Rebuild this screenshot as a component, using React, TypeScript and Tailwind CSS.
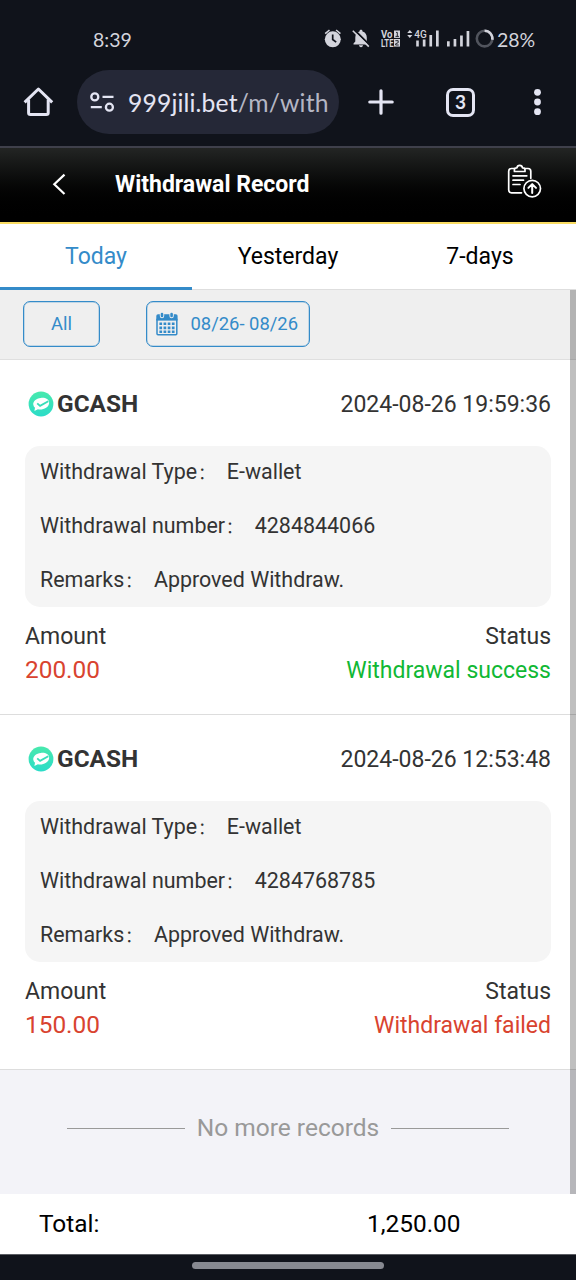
import React from "react";

type WithdrawalEntry = {
  time: string;
  number: string;
  amount: string;
  status: string;
  ok: boolean;
};

const entries: WithdrawalEntry[] = [
  { time: "2024-08-26 19:59:36", number: "4284844066", amount: "200.00", status: "Withdrawal success", ok: true },
  { time: "2024-08-26 12:53:48", number: "4284768785", amount: "150.00", status: "Withdrawal failed", ok: false },
];

function StatusIcons() {
  return (
    <svg className="block h-7 w-[178px] shrink-0" viewBox="322 25 178 28" fill="none">
      {/* alarm */}
      <circle cx="332.8" cy="39.3" r="8" fill="#d3d4dc" />
      <path d="M325.2 33.6l4.3-3.6M340.4 33.6l-4.3-3.6" stroke="#d3d4dc" strokeWidth="1.6" />
      <path d="M332.7 34.5v5l3.5 2.6" stroke="#10131b" strokeWidth="1.7" />
      {/* muted bell */}
      <path
        d="M361 29.8c1 0 1.5.7 1.5 1.6 2.8.8 4.3 3.1 4.3 6v4l1.7 2v1.2h-15v-1.2l1.8-2v-4c0-2.9 1.5-5.2 4.2-6 0-.9.5-1.6 1.5-1.6z"
        fill="#d3d4dc"
      />
      <path d="M359 45.3h4c0 1.1-.8 1.9-2 1.9s-2-.8-2-1.9z" fill="#d3d4dc" />
      <path d="M354.2 29.8l16 15.8" stroke="#10131b" strokeWidth="2" />
      <path d="M352.8 30.7l16 15.9" stroke="#d3d4dc" strokeWidth="1.6" />
      {/* VoLTE */}
      <g fill="#d3d4dc" fontFamily="Roboto, sans-serif" fontWeight="700">
        <text x="381" y="37.6" fontSize="10" textLength="11.5" lengthAdjust="spacingAndGlyphs">Vo</text>
        <text x="381" y="46.9" fontSize="10" textLength="12.5" lengthAdjust="spacingAndGlyphs">LTE</text>
      </g>
      <rect x="394" y="30.5" width="6" height="7.4" fill="#d3d4dc" />
      <rect x="394" y="39" width="6" height="7.6" fill="#d3d4dc" />
      <path d="M396 32.4h1.3v3.8M395.5 36.4h3.4M395.4 40.7h2.8v2l-2.5 1v1.3h3" stroke="#10131b" strokeWidth=".9" />
      {/* data arrows and 4G */}
      <path d="M407.2 33l2.6-2.9 2.6 2.9zM407.2 35l2.6 2.9 2.6-2.9z" fill="#d3d4dc" />
      <text x="414.3" y="37.8" fontSize="10.5" fill="#d3d4dc" fontFamily="Roboto, sans-serif" fontWeight="500" textLength="12.5" lengthAdjust="spacingAndGlyphs">4G</text>
      {/* signal bars */}
      <path
        d="M416.2 40.5h2.6v6h-2.6zM422.8 39.4h2.7v7.1h-2.7zM429.4 35h2.7v11.5h-2.7zM436 30.5h2.7v16H436zM447 41.2h2.7v5.3H447zM453.6 39h2.7v7.5h-2.7zM460.1 35.6h2.7v10.9h-2.7zM466.6 31h2.7v15.5h-2.7z"
        fill="#d3d4dc"
      />
      {/* battery ring */}
      <circle cx="484.6" cy="38.6" r="7.8" stroke="#51545d" strokeWidth="2.6" />
      <path d="M484.6 30.8a7.8 7.8 0 0 1 7.7 9" stroke="#d3d4dc" strokeWidth="2.6" />
    </svg>
  );
}

function StatusBar() {
  return (
    <div className="flex h-[70px] items-start pt-[25px] font-['Lato',sans-serif] text-[#d3d4dc]">
      <span className="ml-[93px] w-[229px] pt-px text-[19.5px] leading-7">8:39</span>
      <StatusIcons />
      <span className="-ml-[3px] pt-px text-[19.5px] leading-7">28%</span>
    </div>
  );
}

function BrowserBar() {
  return (
    <div className="flex h-16 items-center">
      <svg className="ml-[22px] h-8 w-8" viewBox="22 86 32 32" fill="none" stroke="#e4e5f3" strokeWidth="3" strokeLinejoin="round">
        <path d="M24.6 102.3L38.4 89l13.8 13.3" strokeLinecap="butt" />
        <path d="M28.6 99.5v13.3q0 1.8 1.8 1.8h16q1.8 0 1.8-1.8V99.5" />
      </svg>
      <div className="ml-[23px] flex h-16 w-[262px] items-center rounded-full bg-[#252837]">
        <svg className="ml-3 h-6 w-7" viewBox="89.5 90 28 24" fill="none" stroke="#e4e5f3" strokeWidth="2.3">
          <circle cx="95.3" cy="96.9" r="3.5" />
          <path d="M103 96.9h11M91.3 107.2h11" />
          <circle cx="109.9" cy="107.2" r="3.5" />
        </svg>
        <div className="ml-[11px] pt-px font-['Lato',sans-serif] text-[24.7px] leading-8 tracking-[0.15px] whitespace-nowrap text-[#e4e5f3]">
          999jili.bet<span className="text-[#b4b6c4]">/m/with</span>
        </div>
      </div>
      <svg className="ml-7 h-7 w-7" viewBox="0 0 28 28" stroke="#e4e5f3" strokeWidth="3.2" strokeLinecap="round">
        <path d="M14 2.8v22.4M2.8 14h22.4" />
      </svg>
      <div className="ml-[51px] flex h-[29px] w-[29px] items-center justify-center rounded-[7px] border-3 border-[#e4e5f3] pb-px font-['Lato',sans-serif] text-[19px] leading-none font-bold text-[#e4e5f3]">
        3
      </div>
      <svg className="ml-[58px] h-7 w-2" viewBox="0 0 8 28" fill="#e4e5f3">
        <circle cx="4.5" cy="4.3" r="3.4" />
        <circle cx="4.5" cy="14" r="3.4" />
        <circle cx="4.5" cy="23.7" r="3.4" />
      </svg>
    </div>
  );
}

function PageHeader() {
  return (
    <header className="flex h-[76px] items-center border-b-2 border-[#f9dc62] bg-linear-to-b from-[#232524] to-black">
      <svg className="ml-[52px] h-6 w-4" viewBox="0 0.7 16 24" fill="none" stroke="#fff" strokeWidth="2.2">
        <path d="M12.5 2.3L2.3 12l10.2 9.7" />
      </svg>
      <h1 className="ml-[47px] w-[391px] text-[23px] leading-8 font-bold text-white">Withdrawal Record</h1>
      <svg className="-mt-2 h-9 w-9" viewBox="506 163 36 36" fill="none" stroke="#fff" strokeWidth="1.7" strokeLinejoin="round" strokeLinecap="round">
        <path d="M514.5 168.5h-3q-2.8 0-2.8 2.8V190q0 2.8 2.8 2.8h10" />
        <path d="M524.5 168.5h3.5q2.8 0 2.8 2.8v7" />
        <path d="M514.4 171.5v-1.8q0-1.8 2-1.8h.5q.4-2.5 2.8-2.5t2.8 2.5h.5q2 0 2 1.8v1.8z" />
        <path d="M513 175.8h13.8M513 180.2h10.5M513 184.5h7" />
        <circle cx="532.2" cy="188.6" r="8.3" />
        <path d="M532.2 193v-8.5M528.4 187.9l3.8-3.8 3.8 3.8" strokeWidth="2" />
      </svg>
    </header>
  );
}

function Tabs() {
  return (
    <nav className="grid h-[66px] grid-cols-3 text-center text-[23px] leading-[63px] text-black">
      <div className="h-[66px] border-b-3 border-[#348bc9] pt-px text-[#348bc9]">Today</div>
      <div className="h-[66px] border-b border-[#dedede] pt-px">Yesterday</div>
      <div className="h-[66px] border-b border-[#dedede] pt-px">7-days</div>
    </nav>
  );
}

function CalendarIcon() {
  return (
    <svg className="h-6 w-[22px]" viewBox="156 311.5 22 24" fill="none">
      <path d="M157 319h19.8v14.2q0 1-1 1H158q-1 0-1-1z" stroke="#348bc9" strokeWidth="1.5" />
      <path d="M156.3 320v-4.5q0-1.7 1.7-1.7h17.9q1.7 0 1.7 1.7v4.5z" fill="#348bc9" />
      <path d="M162 313.8v1.8M171.6 313.8v1.8" stroke="#efefef" strokeWidth="4.4" strokeLinecap="round" />
      <path d="M162 313.5v1.9M171.6 313.5v1.9" stroke="#348bc9" strokeWidth="2.6" strokeLinecap="round" />
      <path
        d="M159.4 323.3h15.2M159.4 327.4h15.2M159.4 331.3h15.2"
        stroke="#348bc9"
        strokeWidth="2.6"
        strokeDasharray="2.7 1.45"
      />
    </svg>
  );
}

function Filters() {
  return (
    <div className="flex h-[70px] items-start border-b border-[#dfdfdf] bg-[#efefef] pt-[11px] text-[18.4px] text-[#348bc9]">
      <button className="ml-[23px] h-[46px] w-[77px] rounded-[7px] border border-[#348bc9] ring-[0.5px] ring-[#348bc9]/50 ring-inset">All</button>
      <button className="ml-[46px] flex h-[46px] w-[164px] items-center rounded-[7px] border border-[#348bc9] pl-[9px] ring-[0.5px] ring-[#348bc9]/50 ring-inset">
        <CalendarIcon />
        <span className="ml-[12.5px] whitespace-nowrap">08/26- 08/26</span>
      </button>
    </div>
  );
}

function Detail({ label, value }: { label: string; value: string }) {
  return (
    <div className="flex h-[54px] items-center">
      <span>{label}</span>
      <span className="w-[21.5px] pt-[3px] pl-px text-[16px]">：</span>
      <span className="ml-[8.2px]">{value}</span>
    </div>
  );
}

function Entry({ entry }: { entry: WithdrawalEntry }) {
  return (
    <article className="h-[355px] border-b border-[#dddddd] bg-white pr-[25px] pl-[25px] text-[#333]">
      <div className="flex h-[87px] items-center">
        <svg className="ml-[3px] h-[26px] w-[26px]" viewBox="0 0 26 26">
          <defs>
            <linearGradient id="mint" x1="0" y1="0" x2="0" y2="1">
              <stop offset="0" stopColor="#48e9ad" />
              <stop offset="1" stopColor="#2bdcc8" />
            </linearGradient>
          </defs>
          <circle cx="13" cy="13" r="12.4" fill="url(#mint)" />
          <path
            d="M5.3 13.8c-.5-3.6 2.8-6.3 7.4-6.9 4.5-.6 8 1 8.4 4.3.4 3.5-3 6.600-7.500 7.200-1.400.2-2.600.1-3.700-.2l-3.500 1.700.600-3.200c-.9-.7-1.500-1.700-1.700-2.900z"
            fill="#fff"
          />
          <path d="M9.2 12.4l2.9 2.500 8.200-4.700" fill="none" stroke="#38deb9" strokeWidth="1.900" />
        </svg>
        <span className="ml-[3px] pt-px text-[24.4px] font-bold">GCASH</span>
        <span className="ml-auto pt-[3px] text-[23px]">{entry.time}</span>
      </div>
      <div className="h-[161px] rounded-[15px] bg-[#f5f5f5] pl-[15px] text-[21.45px]">
        <div className="-mt-[1.5px]">
          <Detail label="Withdrawal Type" value="E-wallet" />
          <Detail label="Withdrawal number" value={entry.number} />
          <Detail label="Remarks" value="Approved Withdraw." />
        </div>
      </div>
      <div className="mt-[13px] flex justify-between text-[23px] leading-[34px]">
        <div>
          <div>Amount</div>
          <div className="-mt-px text-[24.4px] text-[#d9432f]">{entry.amount}</div>
        </div>
        <div className="text-right">
          <div>Status</div>
          <div className={entry.ok ? "text-[#10b834]" : "text-[#d9432f]"}>{entry.status}</div>
        </div>
      </div>
    </article>
  );
}

export default function App() {
  return (
    <div className="relative flex h-[1280px] w-[576px] flex-col overflow-hidden bg-white font-['Roboto','Noto_Sans_CJK_SC',sans-serif]">
      <div className="h-[148px] shrink-0 border-b-2 border-[#3f404b] bg-[#10131b]">
        <StatusBar />
        <BrowserBar />
      </div>
      <PageHeader />
      <Tabs />
      <Filters />
      {entries.map((entry) => (
        <Entry key={entry.number} entry={entry} />
      ))}
      <div className="flex h-[124px] items-center justify-center bg-[#f3f3f8] pb-[8px] text-[24.5px] text-[#999]">
        <span className="h-px w-[118px] bg-[#999]" />
        <span className="mx-[11.5px] whitespace-nowrap">No more records</span>
        <span className="h-px w-[118px] bg-[#999]" />
      </div>
      <div className="flex h-[60px] items-center pl-[39px] text-[24.4px] text-black">
        <span className="w-[328px]">Total:</span>
        <span>1,250.00</span>
      </div>
      <footer className="flex h-[26px] justify-center border-t border-[#5b5d63] bg-[#10131b] pt-[7px]">
        <div className="h-[7px] w-48 rounded-full bg-[#878991]" />
      </footer>
      <div className="absolute top-[290px] right-0 h-[904px] w-[6px] bg-black/25" />
    </div>
  );
}
